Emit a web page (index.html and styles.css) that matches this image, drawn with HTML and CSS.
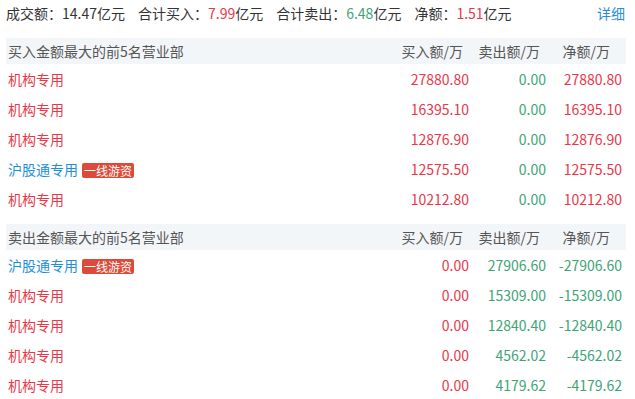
FILE: index.html
```html
<!DOCTYPE html>
<html lang="zh">
<head>
<meta charset="utf-8">
<link rel="stylesheet" href="styles.css">
</head>
<body>
<div class="wrap">
  <div class="summary">
    <div class="stats">
      <span class="stat">成交额：14.47亿元</span>
      <span class="stat">合计买入：<em class="up">7.99</em>亿元</span>
      <span class="stat">合计卖出：<em class="down">6.48</em>亿元</span>
      <span class="stat">净额：<em class="up">1.51</em>亿元</span>
    </div>
    <a class="more">详细</a>
  </div>

  <div class="table">
    <div class="thead">
      <span class="name">买入金额最大的前5名营业部</span>
      <span class="num h">买入额/万</span>
      <span class="num h">卖出额/万</span>
      <span class="num h last">净额/万</span>
    </div>
    <div class="row"><span class="name inst">机构专用</span><span class="num up">27880.80</span><span class="num down">0.00</span><span class="num up">27880.80</span></div>
    <div class="row"><span class="name inst">机构专用</span><span class="num up">16395.10</span><span class="num down">0.00</span><span class="num up">16395.10</span></div>
    <div class="row"><span class="name inst">机构专用</span><span class="num up">12876.90</span><span class="num down">0.00</span><span class="num up">12876.90</span></div>
    <div class="row"><span class="name hk">沪股通专用<i class="tag">一线游资</i></span><span class="num up">12575.50</span><span class="num down">0.00</span><span class="num up">12575.50</span></div>
    <div class="row"><span class="name inst">机构专用</span><span class="num up">10212.80</span><span class="num down">0.00</span><span class="num up">10212.80</span></div>
  </div>

  <div class="table">
    <div class="thead">
      <span class="name">卖出金额最大的前5名营业部</span>
      <span class="num h">买入额/万</span>
      <span class="num h">卖出额/万</span>
      <span class="num h last">净额/万</span>
    </div>
    <div class="row"><span class="name hk">沪股通专用<i class="tag">一线游资</i></span><span class="num up">0.00</span><span class="num down">27906.60</span><span class="num down">-27906.60</span></div>
    <div class="row"><span class="name inst">机构专用</span><span class="num up">0.00</span><span class="num down">15309.00</span><span class="num down">-15309.00</span></div>
    <div class="row"><span class="name inst">机构专用</span><span class="num up">0.00</span><span class="num down">12840.40</span><span class="num down">-12840.40</span></div>
    <div class="row"><span class="name inst">机构专用</span><span class="num up">0.00</span><span class="num down">4562.02</span><span class="num down">-4562.02</span></div>
    <div class="row"><span class="name inst">机构专用</span><span class="num up">0.00</span><span class="num down">4179.62</span><span class="num down">-4179.62</span></div>
  </div>
</div>
</body>
</html>
```

FILE: styles.css
```css
* { box-sizing: border-box; }
html, body { margin: 0; padding: 0; background: #fff; }
body {
  font-family: "Noto Sans CJK SC", "Noto Sans", sans-serif;
  font-size: 14px;
  color: #333;
}
.wrap { width: 635px; padding: 0 9px 0 6px; }
.summary {
  display: flex;
  justify-content: space-between;
  align-items: center;
  height: 26px;
  line-height: 26px;
  margin-bottom: 12px;
}
.stats { display: flex; gap: 13px; }
.stat em { font-style: normal; }
.more { color: #2a8dd4; margin-right: 1px; }
.up { color: #e8384a; }
.down { color: #3ea476; }
.table { margin-bottom: 10px; }
.thead, .row {
  display: grid;
  grid-template-columns: 1fr 77px 77px 76px;
  padding-right: 4px;
}
.thead {
  height: 26px;
  line-height: 26px;
  background: #f3f6f9;
  color: #555;
}
.row { height: 30px; line-height: 30px; }
.name { padding-left: 2px; display: flex; align-items: center; }
.num { text-align: right; }
.h { padding-right: 6px; }
.h.last { padding-right: 12px; }
.inst { color: #e8384a; }
.hk { color: #1e8fd6; }
.tag {
  font-style: normal;
  display: inline-block;
  margin-left: 4px;
  margin-top: 2px;
  height: 15px;
  line-height: 15px;
  padding: 0 2px;
  font-size: 12px;
  color: #fff;
  background: #de4a3a;
  border-radius: 2px;
}
```
